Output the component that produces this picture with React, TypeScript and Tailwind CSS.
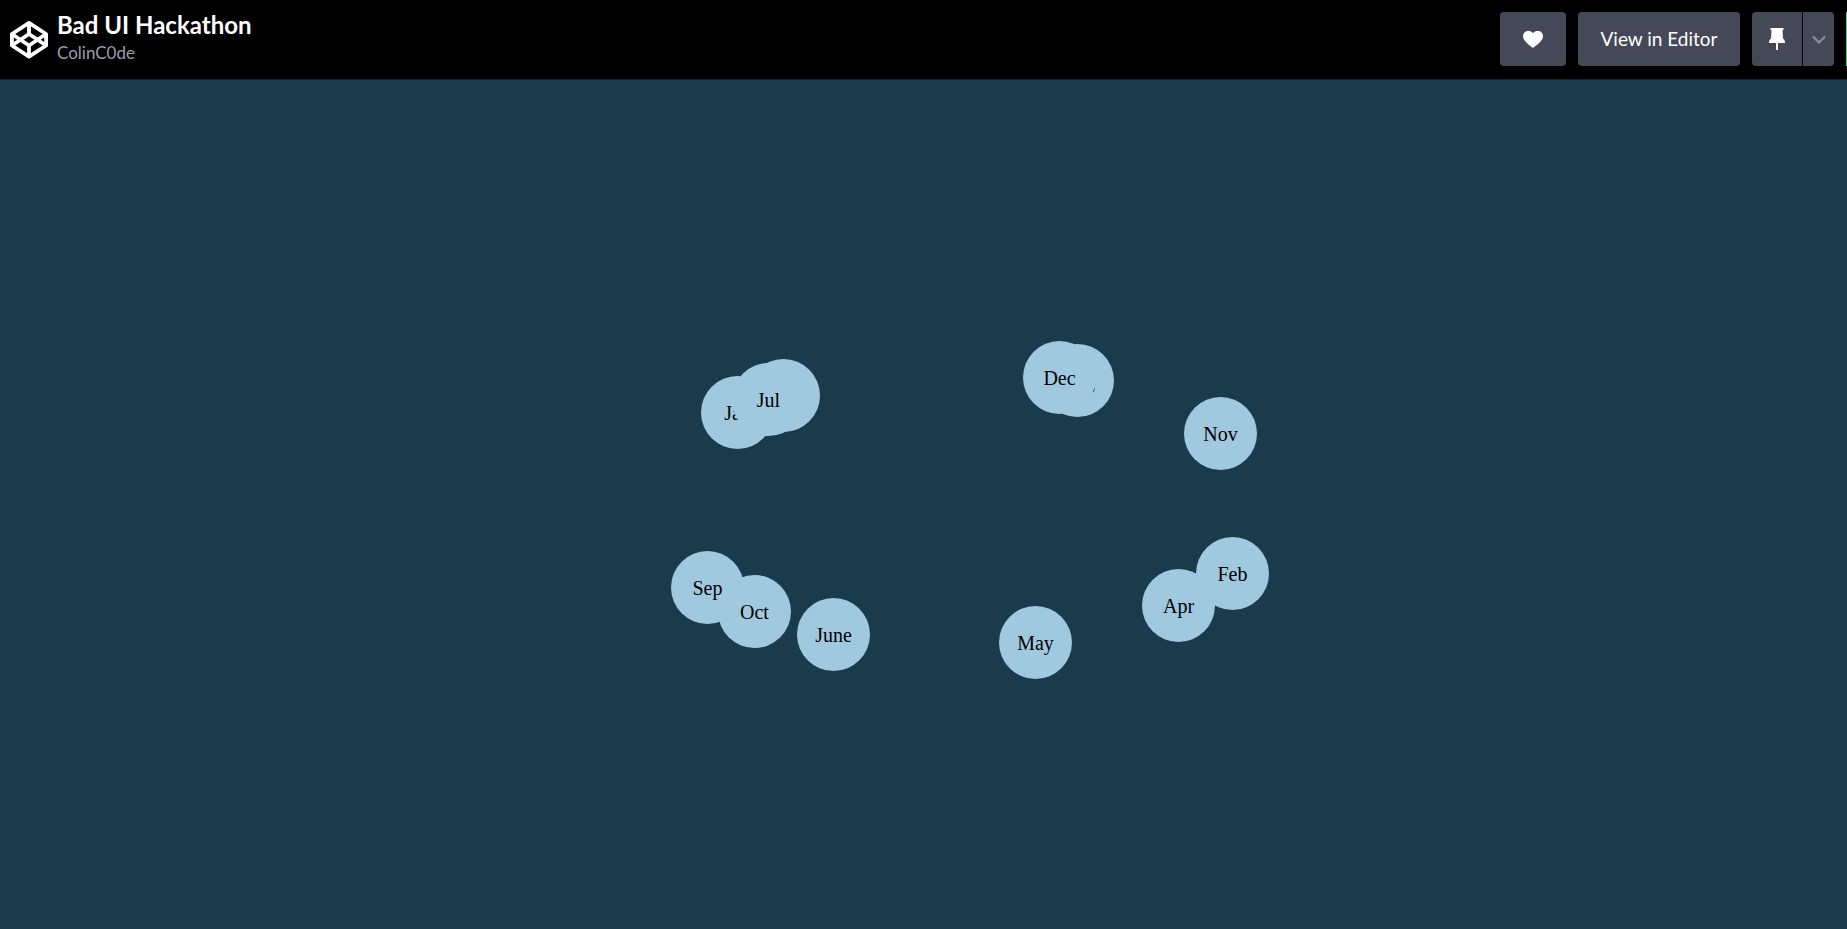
const months = [
  { name: 'Jan', x: 77, y: 296 },
  { name: 'Feb', x: 572, y: 457 },
  { name: 'Mar', x: 123, y: 279 },
  { name: 'Apr', x: 518, y: 489 },
  { name: 'May', x: 375, y: 526 },
  { name: 'June', x: 173, y: 518 },
  { name: 'Jul', x: 108, y: 283 },
  { name: 'Aug', x: 417, y: 264 },
  { name: 'Sep', x: 47, y: 471 },
  { name: 'Oct', x: 94, y: 495 },
  { name: 'Nov', x: 560, y: 317 },
  { name: 'Dec', x: 399, y: 261 },
];

function Logo() {
  return (
    <svg width="40" height="40" viewBox="0 0 40 40" fill="none" stroke="#fff" strokeWidth="3.8" strokeLinejoin="round">
      <path d="M20 2.900 37.100 14v11.500L20 36.600 2.900 25.500V14Z" />
      <path d="M20 2.900V14M20 36.600V25.500M2.900 14 20 25.500 37.100 14M2.900 25.500 20 14 37.100 25.500" />
    </svg>
  );
}

function Header() {
  return (
    <header className="flex h-20 shrink-0 items-start justify-between overflow-hidden border-b border-[#1e1f26] bg-black pl-[9px] font-[Lato,sans-serif]">
      <div className="flex gap-2">
        <a href="#home" aria-label="CodePen" className="mt-5">
          <Logo />
        </a>
        <div className="pt-[11px]">
          <h1 className="text-[24px] leading-7 font-bold text-white">Bad UI Hackathon</h1>
          <a href="#author" className="block text-[17px] leading-7 text-[#9b9dad]">
            ColinC0de
          </a>
        </div>
      </div>
      <div className="flex pt-3 text-white">
        <button aria-label="Love" className="mr-3 flex h-[54px] w-[66px] items-center justify-center rounded bg-[#444857]">
          <svg width="20" height="17" viewBox="0 0 20 17" fill="#fff">
            <path d="M10 17C7 14.600 0 10 0 5.200C0 2 2.300 0 5 0c2.200 0 4 .6 5 2.200C11 .6 12.800 0 15 0c2.700 0 5 2 5 5.200C20 10 13 14.600 10 17Z" />
          </svg>
        </button>
        <button className="mr-3 h-[54px] w-[162px] rounded bg-[#444857] text-[19px]">View in Editor</button>
        <button aria-label="Pin" className="mr-px flex h-[54px] w-[50px] items-center justify-center rounded-l bg-[#444857]">
          <svg width="16" height="22" viewBox="0 0 16 22" fill="#fff">
            <path d="M1.500 0h13v2h-1l.5 8.500c1.200.8 2 2 2 4.500H9v7H7v-7H0c0-2.500.8-3.700 2-4.500L2.500 2h-1Z" />
          </svg>
        </button>
        <button aria-label="Pin options" className="mr-3 flex h-[54px] w-[31px] items-center justify-center rounded-r bg-[#444857]">
          <svg width="14" height="9" viewBox="0 0 14 9" fill="none" stroke="#868ca0" strokeWidth="2.200" strokeLinecap="round">
            <path d="m1.500 2 5.500 5.500 5.500-5.500" />
          </svg>
        </button>
        <div className="h-[54px] w-px bg-linear-to-b from-[#76bfae] to-[#47cf73]" />
      </div>
    </header>
  );
}

export default function App() {
  return (
    <div className="flex min-h-screen flex-col bg-[#193b4b]">
      <Header />
      <main className="relative mx-auto w-[599px] flex-1">
        {months.map((m) => (
          <button
            key={m.name}
            className="absolute size-[73px] rounded-full bg-[#a0c9df] font-['Liberation_Serif',serif] text-[20px] text-black"
            style={{ left: m.x, top: m.y }}
          >
            {m.name}
          </button>
        ))}
      </main>
    </div>
  );
}
